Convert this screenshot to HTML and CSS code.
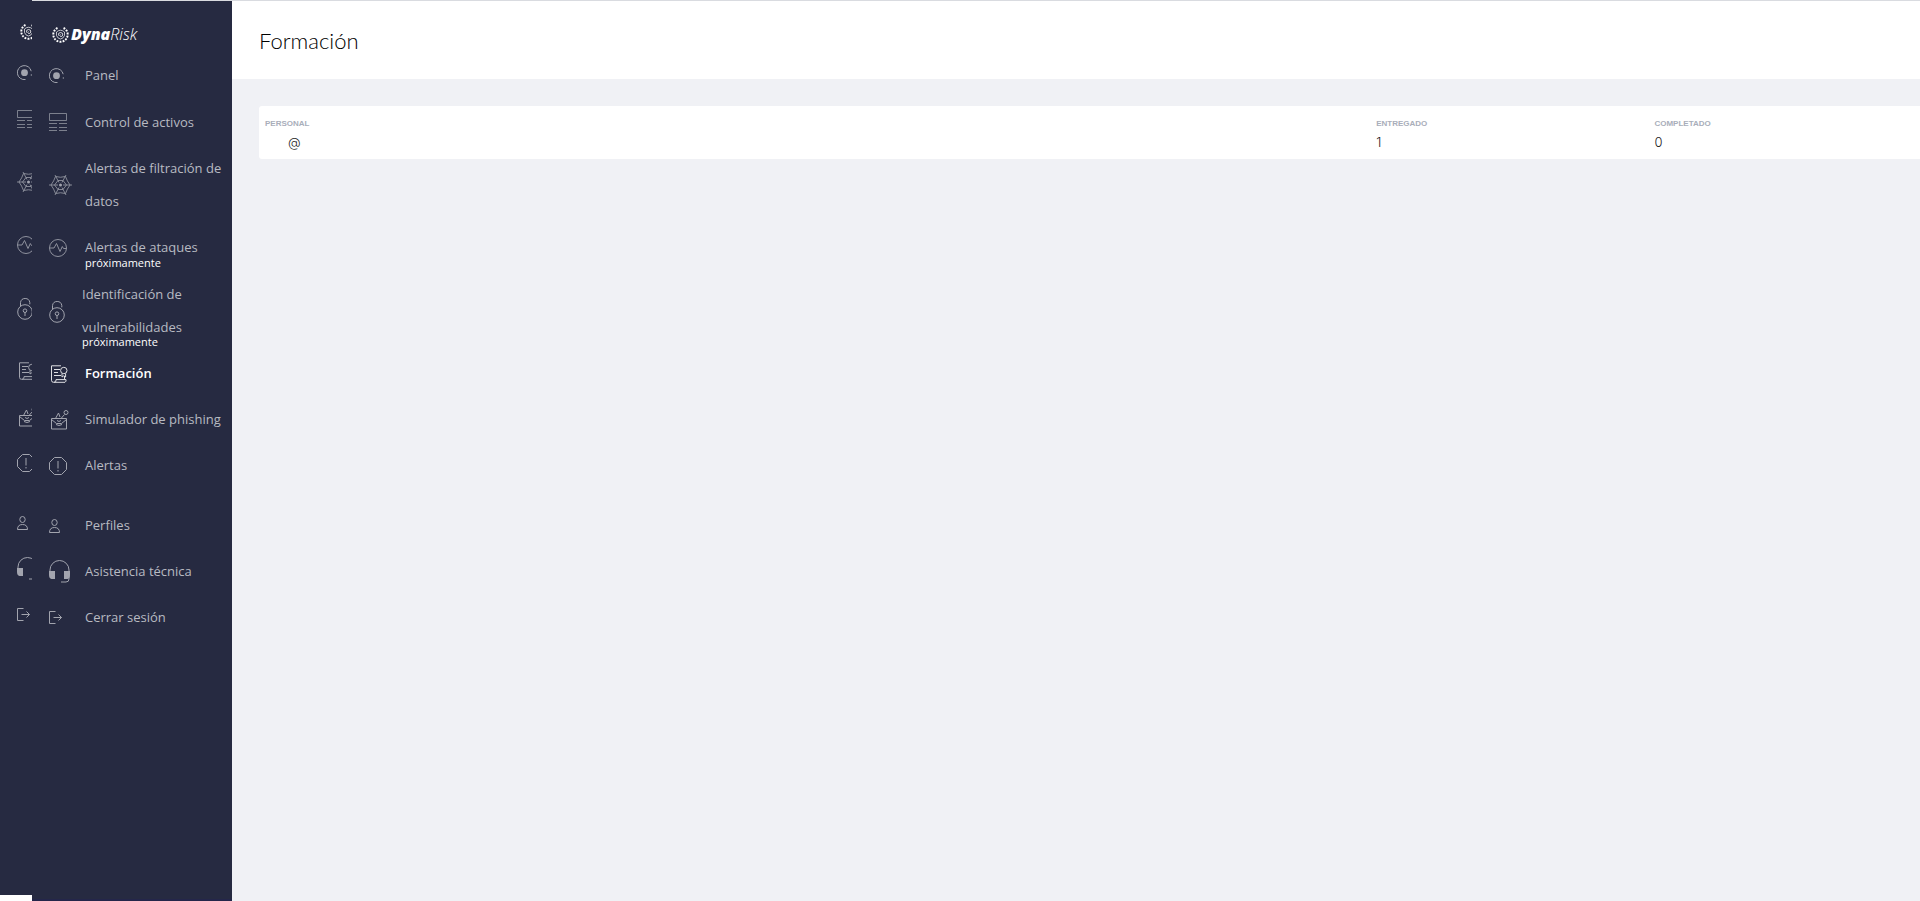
FILE: index.html
```
<!DOCTYPE html>
<html lang="es">
<head>
<meta charset="utf-8">
<title>Formación</title>
<link rel="stylesheet" href="styles.css">
</head>
<body>
<svg class="sprite" aria-hidden="true">
  <symbol id="gear" viewBox="0 0 17 17"><path d="M5.500 2A7.200 7.200 0 1 0 11.500 2" pathLength="25" stroke-width="2" stroke-dasharray="1.200 .78"/><path d="M4.500 6Q8.500 2.500 12.500 6M4.500 6V9.500Q5.500 12.500 8.500 13Q11.500 12.500 12.500 9.500V6" stroke-width=".7"/><path d="M6.500 9.500Q6 6.500 8.500 6.500T10.800 9Q10 11 8.500 10.500T8.500 8.500" stroke-width=".8"/></symbol>
  <symbol id="panel" viewBox="0 0 23 16"><circle cx="7.5" cy="7.7" r="3.4" class="solid"/><path d="M8.500 14.500A7 7 0 1 1 14.2 6.2M14.3 9.3v1.4"/></symbol>
  <symbol id="assets" viewBox="0 0 23 19"><g opacity=".7"><path d="M.5.5h17v7H.5zM0 10.5h8M10 10.5h8M0 14.5h8M10 14.5h8M0 17.5h8M10 17.5h8"/></g></symbol>
  <symbol id="web" viewBox="0 0 23 20"><g stroke-width=".9" opacity=".85"><path d="M0 10h9M14 10h9M6 0l4 7.500M17 0l-4 7.500M6 20l4-7.500M17 20l-4-7.500M6.500 1.500Q11.500 3 16.500 1.500Q18 6 21 10Q18 14 16.500 18.500Q11.500 17 6.500 18.500Q5 14 2 10Q5 6 6.500 1.500z"/><path d="M9 5.500h5l3.500 4.500-3.500 4.500H9L5.500 10z"/></g><circle cx="11.500" cy="10" r="1.500" class="solid"/></symbol>
  <symbol id="pulse" viewBox="0 0 23 18"><g opacity=".85"><circle cx="9" cy="9" r="8.5"/><path d="M.5 9H5l2.500-4.500 3.500 8 2.300-5 1.200 2h3"/></g></symbol>
  <symbol id="lock" viewBox="0 0 23 23"><circle cx="8" cy="15" r="7.300"/><path d="M3.500 9V5.500a4.700 4.700 0 0 1 9.300 0v1.800M8 15.500V19"/><circle cx="8" cy="13.700" r="1.800"/></symbol>
  <symbol id="course" viewBox="0 0 23 18"><path d="M12 .8H2.500v14.500q0 2 2 2H16q1.500-1 1-2.700H7q.5 2.700-2 2.700M15.500 14.500V11M5 4.500h6M5 7.500h4M5 10.500h7"/><circle cx="14.800" cy="5.500" r="3.200"/><path d="M13 8.500v3.500l1.800-1.200 1.800 1.200V8.500"/></symbol>
  <symbol id="phish" viewBox="0 0 23 20"><path d="M2.500 8.500h15v10.500h-15zM2.500 9.500l5 4h5l5-4M7 14.500q3 2 6 0M6.500 8.500L9.500 3l1.500 4M8 10.500q2 2 4 0M12 8.500L15.500 4.500"/><circle cx="17" cy="2.500" r="2"/></symbol>
  <symbol id="alert" viewBox="0 0 23 18"><path d="M5.500.5h7l5 5v7l-5 5h-7l-5-5v-7zM9 4v7.500M9 13v1.500"/></symbol>
  <symbol id="person" viewBox="0 0 23 14"><ellipse cx="5.500" cy="3.500" rx="2.700" ry="3"/><path d="M.5 13.500q0-5 5-5t5 5z"/></symbol>
  <symbol id="headset" viewBox="0 0 23 23"><path d="M1 12v-2a9.500 9.500 0 0 1 19 0v9q0 3-3 3h-5"/><path d="M0 11h6v8H2.500Q0 18.500 0 15zM15 11h6v4q0 3.500-2.500 4H15z" class="solid"/></symbol>
  <symbol id="exit" viewBox="0 0 23 13"><path d="M6.500.5h-6v12h6M4.500 6.500H12.500M9.500 3.500l3 3-3 3"/></symbol>
</svg>

<div class="layout">
  <aside class="rail" aria-hidden="true">
    <div class="brand"><svg class="gear"><use href="#gear"/></svg></div>
    <ul class="menu">
      <li><svg class="icon h16"><use href="#panel"/></svg></li>
      <li><svg class="icon h19"><use href="#assets"/></svg></li>
      <li class="double"><svg class="icon h20"><use href="#web"/></svg></li>
      <li class="extra"><svg class="icon h18"><use href="#pulse"/></svg></li>
      <li class="double"><svg class="icon h23"><use href="#lock"/></svg></li>
      <li><svg class="icon h18"><use href="#course"/></svg></li>
      <li><svg class="icon h20"><use href="#phish"/></svg></li>
      <li><svg class="icon h18"><use href="#alert"/></svg></li>
      <li class="section"><svg class="icon h14"><use href="#person"/></svg></li>
      <li><svg class="icon h23"><use href="#headset"/></svg></li>
      <li><svg class="icon h13"><use href="#exit"/></svg></li>
    </ul>
  </aside>

  <nav class="sidebar" aria-label="Principal">
    <a class="brand" href="#"><svg class="gear" aria-hidden="true"><use href="#gear"/></svg><span class="name"><b>Dyna</b>Risk</span></a>
    <ul class="menu">
      <li><a href="#"><svg class="icon h16"><use href="#panel"/></svg><span>Panel</span></a></li>
      <li><a href="#"><svg class="icon h19"><use href="#assets"/></svg><span>Control de activos</span></a></li>
      <li><a href="#"><svg class="icon h20"><use href="#web"/></svg><span>Alertas de filtración de datos</span></a></li>
      <li><a href="#"><svg class="icon h18"><use href="#pulse"/></svg><span>Alertas de ataques</span></a><small>próximamente</small></li>
      <li class="narrow"><a href="#"><svg class="icon h23"><use href="#lock"/></svg><span>Identificación de vulnerabilidades</span></a><small>próximamente</small></li>
      <li><a class="active" href="#" aria-current="page"><svg class="icon h18"><use href="#course"/></svg><span>Formación</span></a></li>
      <li><a href="#"><svg class="icon h20"><use href="#phish"/></svg><span>Simulador de phishing</span></a></li>
      <li><a href="#"><svg class="icon h18"><use href="#alert"/></svg><span>Alertas</span></a></li>
      <li class="section"><a href="#"><svg class="icon h14"><use href="#person"/></svg><span>Perfiles</span></a></li>
      <li><a href="#"><svg class="icon h23"><use href="#headset"/></svg><span>Asistencia técnica</span></a></li>
      <li><a href="#"><svg class="icon h13"><use href="#exit"/></svg><span>Cerrar sesión</span></a></li>
    </ul>
  </nav>

  <main>
    <header class="page-head"><h1>Formación</h1></header>
    <div class="content">
      <table class="staff">
        <thead><tr><th class="person">Personal</th><th class="sent">Entregado</th><th>Completado</th></tr></thead>
        <tbody><tr><td class="person">@</td><td>1</td><td>0</td></tr></tbody>
      </table>
    </div>
  </main>
</div>
</body>
</html>
```
FILE: styles.css
```
* { box-sizing: border-box; }

body {
  margin: 0;
  background: #fff;
  font-family: "Open Sans", "Noto Sans", sans-serif;
}

.sprite { position: absolute; width: 0; height: 0; }

svg { fill: none; stroke: currentColor; stroke-width: 1; flex: none; }
.solid { fill: currentColor; stroke: none; }

.layout {
  display: grid;
  grid-template-columns: 32px 200px 1fr;
  min-height: 100vh;
}

.rail, .sidebar { background: #262a41; color: #b8bac2; }

.rail {
  overflow: hidden;
  margin-bottom: 6px;
  padding: 19px 0 0 17px;
}

.sidebar {
  border-top: 1px solid #d9dbe0;
  border-bottom: 2px solid #24264a;
  padding: 21px 0 0 17px;
}

.brand {
  display: flex;
  align-items: center;
  gap: 2px;
  height: 24px;
  padding-left: 3px;
  color: #fff;
  text-decoration: none;
}
.gear { width: 17px; height: 17px; }
.name {
  font: italic 300 16px/24px "Open Sans", sans-serif;
}
.name b { font-weight: 800; }

.menu {
  display: flex;
  flex-direction: column;
  gap: 13px;
  margin: 13px 0 0;
  padding: 0;
  list-style: none;
}
.menu li:first-child { margin-bottom: 1px; }
.menu .section { margin-top: 14px; }
.menu a {
  display: flex;
  align-items: center;
  color: inherit;
  font-size: 13px;
  line-height: 33px;
  text-decoration: none;
}
.menu .active { color: #fff; font-weight: 600; }
.menu small {
  display: block;
  margin: -8px 0 -5px 36px;
  color: #fff;
  font-size: 11px;
  line-height: 14px;
}
.menu .narrow small { margin: -9px 0 -5px 33px; }
.sidebar .icon { margin-right: 13px; }
.sidebar .narrow .icon { margin-right: 10px; }

.rail li { display: flex; align-items: center; height: 33px; }
.rail .double { height: 66px; }
.rail .extra { margin-bottom: 1px; }

.icon { width: 23px; opacity: .85; }
.h13 { height: 13px; }
.h14 { height: 14px; }
.h16 { height: 16px; }
.h18 { height: 18px; }
.h19 { height: 19px; }
.h20 { height: 20px; }
.h23 { height: 23px; }

main { background: #f0f1f5; min-width: 0; }

.page-head {
  border-top: 1px solid #d9dbe0;
  background: #fff;
  padding: 24px 27px 22px;
}
h1 {
  margin: 0;
  color: #000;
  font: 300 22px/32px Lato, sans-serif;
}

.content { padding: 27px 0 0 27px; }

.staff {
  width: 100%;
  table-layout: fixed;
  border-collapse: collapse;
  background: #fff;
  border-radius: 3px 0 0 3px;
  text-align: left;
}
.staff th {
  padding: 11px 6px 0;
  color: #a9aeba;
  font: bold 8px/14px "Liberation Sans", sans-serif;
  text-transform: uppercase;
}
.staff td {
  padding: 2px 6px 8px;
  color: #222;
  font: 300 13px/18px Inter, sans-serif;
}
.staff .person { width: 66.9%; }
.staff .sent { width: 16.75%; }
.staff td.person { padding-left: 29px; }
```
